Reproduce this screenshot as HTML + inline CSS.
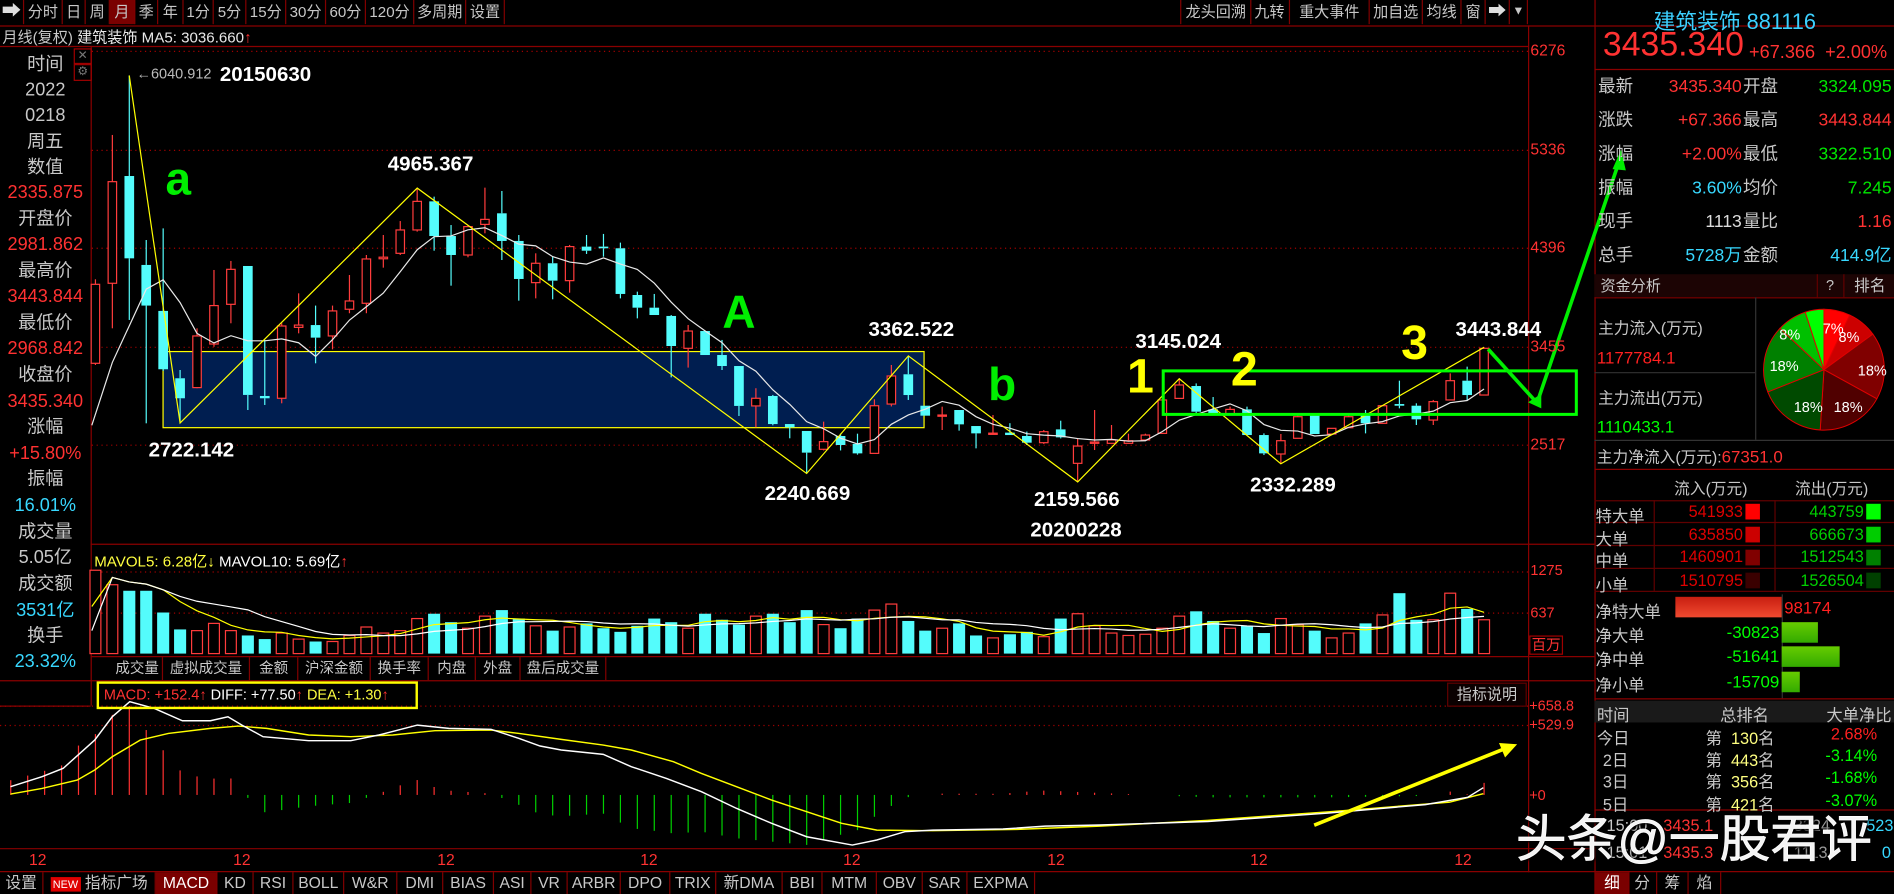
<!DOCTYPE html>
<html><head><meta charset="utf-8">
<style>
html,body{margin:0;padding:0;background:#000;width:1894px;height:894px;overflow:hidden}
#w{position:absolute;left:0;top:0;width:1568px;height:740px;transform:scale(1.20791,1.20811);transform-origin:0 0;background:#000;font-family:"Liberation Sans","Noto Sans CJK SC",sans-serif;color:#c8c8c8;overflow:hidden}
.a{position:absolute;white-space:nowrap}
.btn{position:absolute;top:0;height:20px;line-height:20px;font-size:12.5px;text-align:center;border-right:1px solid #800000;color:#c8c8c8}
.bb{position:absolute;top:722px;height:18px;line-height:18px;font-size:13px;text-align:center;border-right:1px solid #800000;color:#c8c8c8}
.tb{position:absolute;top:544px;height:19px;line-height:19px;font-size:12px;text-align:center;border-right:1px solid #800000;color:#c8c8c8}
.lp{position:absolute;left:0;width:75px;text-align:center;font-size:15px;line-height:18px}
.r{color:#ff3232}.g{color:#00e600}.c{color:#38d8ff}.y{color:#ffff40}.w{color:#fff}.gy{color:#c8c8c8}
.big{font-weight:bold;color:#fff;font-size:17px}
.rr{position:absolute;font-size:14.5px;line-height:16px}
</style></head><body>
<div id="w">
<svg id="s" width="1568" height="740" style="position:absolute;left:0;top:0"></svg>

<div class="btn" style="left:0;width:19px;color:#ddd;font-size:16px">&#x27A1;</div>
<div class="btn" style="left:20px;width:31px">分时</div>
<div class="btn" style="left:52px;width:18px">日</div>
<div class="btn" style="left:71px;width:19px">周</div>
<div class="btn" style="left:91px;width:20px;background:#7a0000">月</div>
<div class="btn" style="left:112px;width:18px">季</div>
<div class="btn" style="left:131px;width:20px">年</div>
<div class="btn" style="left:152px;width:24px">1分</div>
<div class="btn" style="left:177px;width:26px">5分</div>
<div class="btn" style="left:204px;width:32px">15分</div>
<div class="btn" style="left:237px;width:32px">30分</div>
<div class="btn" style="left:270px;width:32px">60分</div>
<div class="btn" style="left:303px;width:39px">120分</div>
<div class="btn" style="left:343px;width:42px">多周期</div>
<div class="btn" style="left:386px;width:31px">设置</div>
<div class="btn" style="left:977px;width:57px;border-left:1px solid #800000">龙头回溯</div>
<div class="btn" style="left:1035px;width:32px">九转</div>
<div class="btn" style="left:1068px;width:65px">重大事件</div>
<div class="btn" style="left:1134px;width:43px">加自选</div>
<div class="btn" style="left:1178px;width:31px">均线</div>
<div class="btn" style="left:1210px;width:19px">窗</div>
<div class="btn" style="left:1230px;width:19px;color:#ddd;font-size:15px">&#x27A1;</div>
<div class="btn" style="left:1250px;width:14px;font-size:10px">&#x25BC;</div>

<div class="a" style="left:2px;top:23px;font-size:12.5px;line-height:16px">月线(复权) <span class="w" style="color:#e8e8e8">建筑装饰 MA5: 3036.660</span><span class="r">&#x2191;</span></div>

<div class="a" style="left:61px;top:40px;width:13px;height:11px;border:1px solid #a00000;color:#777;font-size:10px;line-height:11px;text-align:center">✕</div>
<div class="a" style="left:61px;top:53px;width:13px;height:12px;border:1px solid #a00000;color:#777;font-size:10px;line-height:12px;text-align:center">⚙</div>
<div class="lp" style="top:45px">时间</div>
<div class="lp" style="top:66px">2022</div>
<div class="lp" style="top:87px">0218</div>
<div class="lp" style="top:109px">周五</div>
<div class="lp" style="top:130px">数值</div>
<div class="lp r" style="top:151px">2335.875</div>
<div class="lp" style="top:173px">开盘价</div>
<div class="lp r" style="top:194px">2981.862</div>
<div class="lp" style="top:216px">最高价</div>
<div class="lp r" style="top:237px">3443.844</div>
<div class="lp" style="top:259px">最低价</div>
<div class="lp r" style="top:280px">2968.842</div>
<div class="lp" style="top:302px">收盘价</div>
<div class="lp r" style="top:324px">3435.340</div>
<div class="lp" style="top:345px">涨幅</div>
<div class="lp r" style="top:367px">+15.80%</div>
<div class="lp" style="top:388px">振幅</div>
<div class="lp c" style="top:410px">16.01%</div>
<div class="lp" style="top:432px">成交量</div>
<div class="lp" style="top:453px">5.05亿</div>
<div class="lp" style="top:475px">成交额</div>
<div class="lp c" style="top:497px">3531亿</div>
<div class="lp" style="top:518px">换手</div>
<div class="lp c" style="top:539px">23.32%</div>

<div class="a r" style="left:1267px;top:34px;font-size:13px">6276</div>
<div class="a r" style="left:1267px;top:116px;font-size:13px">5336</div>
<div class="a r" style="left:1267px;top:197px;font-size:13px">4396</div>
<div class="a r" style="left:1267px;top:279px;font-size:13px">3455</div>
<div class="a r" style="left:1267px;top:360px;font-size:13px">2517</div>
<div class="a r" style="left:1267px;top:465px;font-size:12px">1275</div>
<div class="a r" style="left:1267px;top:500px;font-size:12px">637</div>
<div class="a r" style="left:1266px;top:526px;font-size:12px;border:1px solid #a00000;line-height:14px;padding:0 1px">百万</div>
<div class="a r" style="left:1266px;top:577px;font-size:12px">+658.8</div>
<div class="a r" style="left:1266px;top:593px;font-size:12px">+529.9</div>
<div class="a r" style="left:1266px;top:651px;font-size:12px">+0</div>
<div class="a r" style="left:24px;top:704px;font-size:13px">12</div>
<div class="a r" style="left:193px;top:704px;font-size:13px">12</div>
<div class="a r" style="left:362px;top:704px;font-size:13px">12</div>
<div class="a r" style="left:530px;top:704px;font-size:13px">12</div>
<div class="a r" style="left:698px;top:704px;font-size:13px">12</div>
<div class="a r" style="left:867px;top:704px;font-size:13px">12</div>
<div class="a r" style="left:1035px;top:704px;font-size:13px">12</div>
<div class="a r" style="left:1204px;top:704px;font-size:13px">12</div>

<div class="a gy" style="left:113px;top:54px;font-size:12px;color:#bbb">&#x2190;6040.912</div>
<div class="a big" style="left:182px;top:52px">20150630</div>
<div class="a big" style="left:321px;top:126px">4965.367</div>
<div class="a big" style="left:123px;top:363px">2722.142</div>
<div class="a big" style="left:633px;top:399px">2240.669</div>
<div class="a big" style="left:719px;top:263px">3362.522</div>
<div class="a big" style="left:856px;top:404px">2159.566</div>
<div class="a big" style="left:853px;top:429px">20200228</div>
<div class="a big" style="left:940px;top:273px">3145.024</div>
<div class="a big" style="left:1035px;top:392px">2332.289</div>
<div class="a big" style="left:1205px;top:263px">3443.844</div>
<div class="a" style="left:137px;top:128px;font-size:38px;font-weight:bold;color:#00ee00">a</div>
<div class="a" style="left:598px;top:238px;font-size:38px;font-weight:bold;color:#00ee00">A</div>
<div class="a" style="left:818px;top:298px;font-size:38px;font-weight:bold;color:#00ee00">b</div>
<div class="a" style="left:933px;top:290px;font-size:40px;font-weight:bold;color:#ffff00">1</div>
<div class="a" style="left:1019px;top:284px;font-size:40px;font-weight:bold;color:#ffff00">2</div>
<div class="a" style="left:1160px;top:262px;font-size:40px;font-weight:bold;color:#ffff00">3</div>

<div class="a" style="left:78px;top:454px;font-size:12.5px"><span class="y">MAVOL5: 6.28亿</span><span style="color:#ffff40">&#x2193;</span> <span class="w">MAVOL10: 5.69亿</span><span class="r">&#x2191;</span></div>

<div class="tb" style="left:93px;width:41px">成交量</div>
<div class="tb" style="left:135px;width:71px">虚拟成交量</div>
<div class="tb" style="left:207px;width:39px">金额</div>
<div class="tb" style="left:247px;width:59px">沪深金额</div>
<div class="tb" style="left:307px;width:47px">换手率</div>
<div class="tb" style="left:355px;width:38px">内盘</div>
<div class="tb" style="left:394px;width:36px">外盘</div>
<div class="tb" style="left:431px;width:70px">盘后成交量</div>

<div class="a" style="left:80px;top:564px;width:258px;height:19px;border:2px solid #ffff00;font-size:12px;line-height:19px;padding-left:4px"><span class="r">MACD: +152.4</span><span class="r">&#x2191;</span> <span class="w">DIFF: +77.50</span><span class="r">&#x2191;</span> <span class="y">DEA: +1.30</span><span class="r">&#x2191;</span></div>
<div class="a" style="left:1198px;top:565px;width:64px;height:18px;border:1px solid #600000;font-size:12.5px;line-height:18px;text-align:center;background:#0a0000">指标说明</div>

<div class="bb" style="left:0;width:35px">设置</div>
<div class="bb" style="left:36px;width:92px"><span style="background:#e00000;color:#fff;font-size:9px;padding:0 2px;line-height:12px;display:inline-block">NEW</span> 指标广场</div>
<div class="bb" style="left:129px;width:50px;background:#7a0000;color:#fff">MACD</div>
<div class="bb" style="left:180px;width:29px">KD</div>
<div class="bb" style="left:210px;width:32px">RSI</div>
<div class="bb" style="left:243px;width:41px">BOLL</div>
<div class="bb" style="left:285px;width:43px">W&amp;R</div>
<div class="bb" style="left:329px;width:37px">DMI</div>
<div class="bb" style="left:367px;width:41px">BIAS</div>
<div class="bb" style="left:409px;width:30px">ASI</div>
<div class="bb" style="left:440px;width:29px">VR</div>
<div class="bb" style="left:470px;width:43px">ARBR</div>
<div class="bb" style="left:514px;width:40px">DPO</div>
<div class="bb" style="left:555px;width:37px">TRIX</div>
<div class="bb" style="left:593px;width:54px">新DMA</div>
<div class="bb" style="left:648px;width:32px">BBI</div>
<div class="bb" style="left:681px;width:44px">MTM</div>
<div class="bb" style="left:726px;width:37px">OBV</div>
<div class="bb" style="left:764px;width:36px">SAR</div>
<div class="bb" style="left:801px;width:55px">EXPMA</div>

<div class="a" style="left:1369px;top:4px;font-size:18px;color:#3cd0ff">建筑装饰 881116</div>
<div class="a r" style="left:1327px;top:22px;font-size:28px;line-height:30px">3435.340</div>
<div class="a r" style="left:1448px;top:35px;font-size:15px">+67.366</div>
<div class="a r" style="left:1511px;top:35px;font-size:15px">+2.00%</div>

<div class="rr" style="left:1323px;top:64px">最新</div><div class="rr r" style="right:126px;top:64px">3435.340</div><div class="rr" style="left:1443px;top:64px">开盘</div><div class="rr g" style="right:2px;top:64px">3324.095</div>
<div class="rr" style="left:1323px;top:92px">涨跌</div><div class="rr r" style="right:126px;top:92px">+67.366</div><div class="rr" style="left:1443px;top:92px">最高</div><div class="rr r" style="right:2px;top:92px">3443.844</div>
<div class="rr" style="left:1323px;top:120px">涨幅</div><div class="rr r" style="right:126px;top:120px">+2.00%</div><div class="rr" style="left:1443px;top:120px">最低</div><div class="rr g" style="right:2px;top:120px">3322.510</div>
<div class="rr" style="left:1323px;top:148px">振幅</div><div class="rr c" style="right:126px;top:148px">3.60%</div><div class="rr" style="left:1443px;top:148px">均价</div><div class="rr g" style="right:2px;top:148px">7.245</div>
<div class="rr" style="left:1323px;top:176px">现手</div><div class="rr" style="right:126px;top:176px;color:#ddd">1113</div><div class="rr" style="left:1443px;top:176px">量比</div><div class="rr r" style="right:2px;top:176px">1.16</div>
<div class="rr" style="left:1323px;top:204px">总手</div><div class="rr c" style="right:126px;top:204px">5728万</div><div class="rr" style="left:1443px;top:204px">金额</div><div class="rr c" style="right:2px;top:204px">414.9亿</div>

<div class="a" style="left:1320px;top:227px;width:248px;height:19px;background:#1c0404"></div>
<div class="a" style="left:1325px;top:229px;font-size:12.5px;line-height:16px">资金分析</div>
<div class="a" style="left:1504px;top:227px;width:20px;height:19px;border-left:1px solid #600000;font-size:12px;line-height:19px;text-align:center">?</div>
<div class="a" style="left:1526px;top:227px;width:42px;height:19px;border-left:1px solid #600000;font-size:13px;line-height:19px;text-align:center">排名</div>

<div class="a" style="left:1323px;top:261px;font-size:13px">主力流入(万元)</div>
<div class="a r" style="left:1322px;top:288px;font-size:14px;color:#ff2020">1177784.1</div>
<div class="a" style="left:1323px;top:319px;font-size:13px">主力流出(万元)</div>
<div class="a g" style="left:1322px;top:345px;font-size:14px;color:#00ff00">1110433.1</div>
<div class="a" style="left:1322px;top:368px;font-size:13px">主力净流入(万元):<span class="r" style="font-size:14px">67351.0</span></div>

<div class="a" style="left:1386px;top:394px;font-size:13px">流入(万元)</div>
<div class="a" style="left:1486px;top:394px;font-size:13px">流出(万元)</div>
<div class="a" style="left:1321px;top:416px;font-size:13.5px">特大单</div>
<div class="a" style="left:1321px;top:435px;font-size:13.5px">大单</div>
<div class="a" style="left:1321px;top:453px;font-size:13.5px">中单</div>
<div class="a" style="left:1321px;top:473px;font-size:13.5px">小单</div>
<div class="a" style="right:125px;top:416px;font-size:13.5px;color:#e00000">541933</div>
<div class="a" style="right:125px;top:435px;font-size:13.5px;color:#e00000">635850</div>
<div class="a" style="right:125px;top:453px;font-size:13.5px;color:#e00000">1460901</div>
<div class="a" style="right:125px;top:473px;font-size:13.5px;color:#e00000">1510795</div>
<div class="a" style="right:25px;top:416px;font-size:13.5px;color:#00d000">443759</div>
<div class="a" style="right:25px;top:435px;font-size:13.5px;color:#00d000">666673</div>
<div class="a" style="right:25px;top:453px;font-size:13.5px;color:#00d000">1512543</div>
<div class="a" style="right:25px;top:473px;font-size:13.5px;color:#00d000">1526504</div>

<div class="a" style="left:1321px;top:495px;font-size:13.5px">净特大单</div>
<div class="a" style="left:1321px;top:515px;font-size:13.5px">净大单</div>
<div class="a" style="left:1321px;top:535px;font-size:13.5px">净中单</div>
<div class="a" style="left:1321px;top:556px;font-size:13.5px">净小单</div>
<div class="a" style="left:1387px;top:494px;width:88px;height:17px;background:linear-gradient(#c81e10,#f04a30)"></div>
<div class="a r" style="left:1477px;top:495px;font-size:14px;color:#ff2020">98174</div>
<div class="a" style="right:95px;top:515px;font-size:14px;color:#00ff00">-30823</div>
<div class="a" style="right:95px;top:535px;font-size:14px;color:#00ff00">-51641</div>
<div class="a" style="right:95px;top:556px;font-size:14px;color:#00ff00">-15709</div>
<div class="a" style="left:1475px;top:515px;width:30px;height:17px;background:linear-gradient(#6c0,#3a0)"></div>
<div class="a" style="left:1475px;top:535px;width:48px;height:17px;background:linear-gradient(#6c0,#3a0)"></div>
<div class="a" style="left:1475px;top:556px;width:15px;height:17px;background:linear-gradient(#6c0,#3a0)"></div>

<div class="a" style="left:1320px;top:580px;width:248px;height:18px;background:#1a1a1a"></div>
<div class="a" style="left:1322px;top:581px;font-size:13.5px">时间</div>
<div class="a" style="left:1424px;top:581px;font-size:13.5px">总排名</div>
<div class="a" style="left:1512px;top:581px;font-size:13.5px">大单净比</div>
<div class="a" style="left:1322px;top:600px;font-size:13.5px">今日</div>
<div class="a" style="left:1327px;top:618px;font-size:13.5px">2日</div>
<div class="a" style="left:1327px;top:636px;font-size:13.5px">3日</div>
<div class="a" style="left:1327px;top:655px;font-size:13.5px">5日</div>
<div class="a" style="left:1412px;top:600px;font-size:13.5px">第 &nbsp;<span class="y" style="color:#ffff80">130</span>名</div>
<div class="a" style="left:1412px;top:618px;font-size:13.5px">第 &nbsp;<span class="y" style="color:#ffff80">443</span>名</div>
<div class="a" style="left:1412px;top:636px;font-size:13.5px">第 &nbsp;<span class="y" style="color:#ffff80">356</span>名</div>
<div class="a" style="left:1412px;top:655px;font-size:13.5px">第 &nbsp;<span class="y" style="color:#ffff80">421</span>名</div>
<div class="a" style="right:14px;top:600px;font-size:13.5px;color:#ff2020">2.68%</div>
<div class="a" style="right:14px;top:618px;font-size:13.5px;color:#00ff00">-3.14%</div>
<div class="a" style="right:14px;top:636px;font-size:13.5px;color:#00ff00">-1.68%</div>
<div class="a" style="right:14px;top:655px;font-size:13.5px;color:#00ff00">-3.07%</div>
<div class="a" style="left:1330px;top:676px;font-size:13.5px">15:00</div>
<div class="a r" style="left:1377px;top:676px;font-size:13.5px">3435.1</div>
<div class="a" style="left:1485px;top:676px;font-size:13.5px;color:#999">3324</div>
<div class="a c" style="left:1545px;top:676px;font-size:13.5px">523</div>
<div class="a" style="left:1330px;top:698px;font-size:13.5px">15:01</div>
<div class="a r" style="left:1377px;top:698px;font-size:13.5px">3435.3</div>
<div class="a" style="left:1485px;top:698px;font-size:13.5px;color:#999">1113</div>
<div class="a c" style="left:1558px;top:698px;font-size:13.5px">0</div>
<div class="a" style="left:1255px;top:672px;font-size:42px;line-height:46px;color:#f4f4f4;font-weight:normal;-webkit-text-stroke:0.6px #fff;text-shadow:0 0 3px #000,1px 1px 2px #000">头条@一股君评</div>
<div class="bb" style="left:1320px;width:27px;background:#7a0000;color:#fff;border-left:1px solid #800000">细</div>
<div class="bb" style="left:1348px;width:23px">分</div>
<div class="bb" style="left:1372px;width:25px">筹</div>
<div class="bb" style="left:1398px;width:26px">焰</div>

<div class="a" style="left:1473px;top:270px;font-size:12px;color:#fff">8%</div>
<div class="a" style="left:1509px;top:265px;font-size:12px;color:#fff">7%</div>
<div class="a" style="left:1522px;top:272px;font-size:12px;color:#fff">8%</div>
<div class="a" style="left:1465px;top:296px;font-size:12px;color:#fff">18%</div>
<div class="a" style="left:1538px;top:300px;font-size:12px;color:#fff">18%</div>
<div class="a" style="left:1485px;top:330px;font-size:12px;color:#fff">18%</div>
<div class="a" style="left:1518px;top:330px;font-size:12px;color:#fff">18%</div>
</div>

<script>
(function(){
var s=document.getElementById('s'),h='';
function L(x1,y1,x2,y2,c,w,d){h+='<line x1="'+x1+'" y1="'+y1+'" x2="'+x2+'" y2="'+y2+'" stroke="'+c+'" stroke-width="'+(w||1)+'"'+(d?' stroke-dasharray="'+d+'"':'')+'/>';}
function R(x,y,w,ht,f,st,sw){h+='<rect x="'+x+'" y="'+y+'" width="'+w+'" height="'+ht+'" fill="'+f+'"'+(st?' stroke="'+st+'" stroke-width="'+(sw||1)+'"':'')+'/>';}
function P(pts,c,w){h+='<polyline fill="none" stroke="'+c+'" stroke-width="'+(w||1)+'" points="'+pts.map(function(p){return p[0].toFixed(1)+','+p[1].toFixed(1)}).join(' ')+'"/>';}
var DR='#8a0000';
L(0,21.5,1568,21.5,DR);L(0,38.5,1265,38.5,DR);
L(75.5,38,75.5,584,DR);L(0,584.5,75,584.5,DR);
L(1265.5,21,1265.5,722,DR);L(1320.5,0,1320.5,740,DR);
L(75,450.5,1320,450.5,DR);L(75,543.5,1320,543.5,DR);L(0,563.5,1320,563.5,DR);
L(0,702.5,1320,702.5,DR);L(0,721.5,1568,721.5,DR);
L(1320,57.5,1568,57.5,DR);L(1320,246.5,1568,246.5,DR);
L(1320,308.5,1453,308.5,'#333');L(1453.5,246,1453.5,364,'#333');L(1320,364.5,1568,364.5,'#333');L(1320,388.5,1568,388.5,DR);
[414,432,451,470,489].forEach(function(y){L(1320,y+.5,1568,y+.5,'#600000');});
L(1369.5,414,1369.5,489,'#600000');L(1469.5,414,1469.5,489,'#600000');
L(1475.5,492,1475.5,578,'#333');L(1320,578.5,1568,578.5,DR);L(1320,670.5,1568,670.5,DR);
[42,124,205,287,368].forEach(function(y){L(76,y+.5,1265,y+.5,'#a00000',1,'1,3');});
[473,507].forEach(function(y){L(76,y+.5,1265,y+.5,'#a00000',1,'1,3');});
[584,600].forEach(function(y){L(0,y+.5,1265,y+.5,'#a00000',1,'1,3');});
var C=[[3292,4094,3276,4046],[4056,5472,3626,5026],[5080,6040,3706,4294],[4231,4469,2719,3843],[3792,4580,3220,3235],[3149,3228,2722,2958],[3060,3626,3054,3553],[3476,4183,3450,3843],[3855,4269,3674,4189],[4221,4221,2846,2990],[2980,3515,2894,2958],[2958,3674,2910,3648],[3635,3960,3578,3657],[3657,3843,3292,3537],[3553,3843,3425,3792],[3808,4135,3770,3887],[3865,4326,3770,4288],[4290,4517,4205,4305],[4342,4650,4326,4565],[4565,4965,4549,4838],[4838,4883,4367,4507],[4507,4612,4033,4326],[4326,4612,4304,4597],[4618,4969,4533,4666],[4724,4937,4278,4460],[4460,4517,3890,4097],[4062,4342,3912,4247],[4247,4310,3903,4081],[4081,4422,3966,4406],[4406,4517,4336,4367],[4406,4527,4310,4390],[4390,4444,3912,3954],[3944,3976,3721,3823],[3823,3954,3753,3753],[3744,3753,3158,3457],[3435,3658,3251,3600],[3600,3600,3371,3371],[3371,3515,3228,3266],[3266,3266,2789,2885],[2885,3054,2680,2958],[2980,2990,2700,2712],[2712,2712,2576,2681],[2646,2646,2241,2439],[2471,2735,2460,2544],[2598,2620,2460,2512],[2522,2620,2420,2432],[2432,2948,2432,2887],[2903,3276,2880,3171],[3187,3362,2942,2989],[2887,2887,2792,2792],[2790,2878,2655,2798],[2846,2846,2649,2709],[2693,2693,2480,2623],[2615,2798,2615,2625],[2630,2720,2607,2607],[2598,2640,2512,2534],[2534,2655,2522,2639],[2661,2744,2575,2585],[2337,2576,2159,2502],[2528,2846,2464,2540],[2528,2703,2528,2560],[2528,2620,2528,2553],[2560,2620,2560,2607],[2623,2942,2617,2942],[2957,3145,2957,3085],[3075,3100,2814,2830],[2852,2970,2814,2814],[2808,2878,2808,2852],[2852,2878,2607,2607],[2607,2623,2416,2432],[2426,2617,2332,2553],[2576,2808,2576,2782],[2808,2808,2617,2617],[2617,2671,2607,2671],[2677,2808,2677,2782],[2814,2846,2623,2719],[2719,2887,2719,2887],[2903,3126,2862,2887],[2887,2910,2703,2757],[2750,2942,2703,2926],[2942,3196,2942,3126],[3126,3260,2935,2989],[2989,3444,2989,3435]];
function py(p){return 42+(6276-p)*0.0867;}
function xi(i){return 79+i*14.02;}
R(135,291,630,63,'#001e50','#ffff00',1);
var RED='#ff3c3c',CY='#54fcfc';
C.forEach(function(k,i){var x=xi(i),o=py(k[0]),c=py(k[3]),hi=py(k[1]),lo=py(k[2]);
 var up=k[3]>=k[0],col=up?RED:CY,t=Math.min(o,c),b=Math.max(o,c);if(b-t<1)b=t+1;
 L(x,hi,x,t,col);L(x,b,x,lo,col);
 if(up)R(x-3.5,t,7,b-t,'#000',RED,1);else R(x-4,t,8,b-t,CY);});
var ma=[];for(var i=4;i<C.length;i++){var sm=0;for(var j=0;j<5;j++)sm+=C[i-j][3];ma.push([xi(i),py(sm/5)]);}
ma.unshift([76,py(2700)],[xi(1),py(3300)],[xi(3),py(4000)]);
P(ma,'#e8e8e8',1);
var Z=[[2,6040],[5,2722],[19,4965],[42,2240],[48,3362],[58,2159],[64,3145],[70,2332],[82,3444]];
P(Z.map(function(z){return [xi(z[0]),py(z[1])];}),'#ffff00',1);
R(963,307,342,36,'none','#00ff00',2.5);
P([[1232,289],[1272,333]],'#00ee00',3);
h+='<polygon points="1265,333 1276,338 1276,326" fill="#00ee00"/>';
P([[1272,335],[1340,135]],'#00ee00',3);
h+='<polygon points="1342,124 1335,140 1346,141" fill="#00ee00"/>';
var V=[472,484,489,489,507,521,522,516,522,526,529,524,529,531,531,526,519,524,522,512,508,515,520,510,505,512,518,522,519,516,520,523,518,512,515,520,508,513,517,510,508,515,505,517,520,512,505,500,514,522,520,516,526,528,525,523,527,512,508,518,524,526,525,520,510,506,514,520,518,524,512,517,522,528,524,516,509,491,513,513,491,504,513];
var vol=V.map(function(t){return 541-t;});
V.forEach(function(t,i){var x=xi(i),up=C[i][3]>=C[i][0];
 if(up)R(x-4.5,t,9,541-t,'#000',RED,1);else R(x-5,t,10,541-t,CY);});
function mav(n){var a=[];for(var i=0;i<vol.length;i++){var m=Math.min(n,i+1),sm=0;for(var j=0;j<m;j++)sm+=vol[i-j];a.push([xi(i),541-sm/m]);}return a;}
var m5=mav(5),m10=mav(10);m5[0]=[76,502];m10[0]=[76,522];
P(m5,'#ffff00',1);P(m10,'#ffffff',1);
function tr(a){return a.map(function(p){return [p[0]*0.5807,529.8+0.2759*p[1]];});}
var DIF=tr([[15,440],[60,410],[90,385],[135,300],[160,230],[185,185],[220,205],[260,242],[300,242],[325,230],[345,255],[375,290],[440,302],[500,302],[540,285],[595,255],[640,265],[700,268],[740,295],[770,318],[800,330],[860,343],[900,380],[950,415],[1000,455],[1050,505],[1100,550],[1150,590],[1215,615],[1250,600],[1290,575],[1330,570],[1430,567],[1490,558],[1568,555]]).concat([[1000,680],[1100,673],[1180,666],[1215,660],[1228,652]]);
var DEA=tr([[15,462],[60,445],[110,420],[135,390],[160,350],[200,300],[240,280],[300,265],[340,258],[380,265],[440,285],[500,290],[560,285],[620,272],[700,270],[740,280],[800,298],[860,315],[900,330],[960,365],[1000,400],[1050,440],[1100,480],[1150,515],[1200,550],[1250,570],[1330,572],[1450,568],[1568,558]]).concat([[1000,679],[1100,672],[1200,664],[1228,657]]);
function at(a,x){for(var i=1;i<a.length;i++){if(a[i][0]>=x){var p=a[i-1],q=a[i],t=(x-p[0])/(q[0]-p[0]);return p[1]+t*(q[1]-p[1]);}}return a[a.length-1][1];}
for(var i=-5;i<=82;i++){var x=xi(i);if(x<8)continue;var d=at(DEA,x)-at(DIF,x),hh=2*d;
 if(Math.abs(hh)<0.5)continue;if(hh>0)L(x,658-hh,x,658,'#ff3030');else L(x,658,x,658-hh,'#00d000');}
P(DEA,'#ffff00',1.2);P(DIF,'#ffffff',1.2);
P([[1088,683],[1245,620]],'#ffff00',3);
h+='<polygon points="1256,616 1241,615 1246,627" fill="#ffff00"/>';
var cx=1510,cy=306,r=50,sl=[[7,'#ff0000'],[8,'#cc0000'],[18,'#800000'],[18,'#500000'],[18,'#004a00'],[18,'#008000'],[8,'#00c000'],[5,'#00ff00']],a0=-90;
sl.forEach(function(q){var a1=a0+q[0]*3.6,r0=a0*Math.PI/180,r1=a1*Math.PI/180;
 h+='<path d="M'+cx+','+cy+' L'+(cx+r*Math.cos(r0)).toFixed(1)+','+(cy+r*Math.sin(r0)).toFixed(1)+' A'+r+','+r+' 0 0 1 '+(cx+r*Math.cos(r1)).toFixed(1)+','+(cy+r*Math.sin(r1)).toFixed(1)+' Z" fill="'+q[1]+'" stroke="#e00000" stroke-width="0.8"/>';a0=a1;});
[['#ff0000','#00ff00'],['#cc0000','#00cc00'],['#800000','#008000'],['#3a0000','#004000']].forEach(function(q,k){var y=[417,436,455,474][k];R(1445,y,12,13,q[0]);R(1545,y,12,13,q[1]);});
s.innerHTML=h;
})();
</script>
</body></html>
